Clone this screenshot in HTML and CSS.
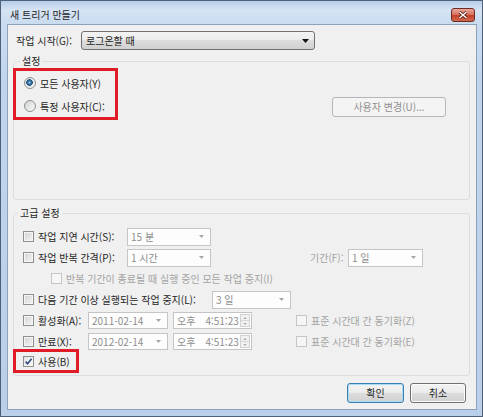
FILE: index.html
```html
<!DOCTYPE html>
<html lang="ko">
<head>
<meta charset="utf-8">
<title>새 트리거 만들기</title>
<link rel="stylesheet" href="styles.css">
</head>
<body>
<div class="window">
  <div class="titlebar">
    <span class="title">새 트리거 만들기</span>
    <span class="close"><svg width="10" height="8" viewBox="0 0 10 8"><path d="M1.5 1L8.5 7M8.5 1L1.5 7" stroke="#5a1a10" stroke-width="3" fill="none"/><path d="M1.5 1L8.5 7M8.5 1L1.5 7" stroke="#fff" stroke-width="1.5" fill="none"/></svg></span>
  </div>
  <div class="content">
    <div class="row-start">
      <span class="start-label">작업 시작(G):</span>
      <div class="select"><span>로그온할 때</span><svg width="7" height="4" viewBox="0 0 7 4"><path d="M0 0H7L3.5 4Z" fill="#111"/></svg></div>
    </div>

    <fieldset class="group group-settings">
      <legend>설정</legend>
      <div class="settings-row">
        <div class="mark radios">
          <div class="radio-row"><span class="radio checked"></span><span>모든 사용자(Y)</span></div>
          <div class="radio-row second"><span class="radio"></span><span>특정 사용자(C):</span></div>
        </div>
        <div class="btn disabled user-btn">사용자 변경(U)...</div>
      </div>
    </fieldset>

    <fieldset class="group group-adv">
      <legend>고급 설정</legend>
      <div class="adv-row">
        <span class="cb"></span><span class="lbl w-short">작업 지연 시간(S):</span>
        <div class="combo w84"><span>15 분</span><svg class="tri" width="5" height="3" viewBox="0 0 5 3"><path d="M0 0H5L2.5 3Z"/></svg></div>
      </div>
      <div class="adv-row">
        <span class="cb"></span><span class="lbl w-short">작업 반복 간격(P):</span>
        <div class="combo w84"><span>1 시간</span><svg class="tri" width="5" height="3" viewBox="0 0 5 3"><path d="M0 0H5L2.5 3Z"/></svg></div>
        <span class="lbl dim period-label">기간(F):</span>
        <div class="combo w75"><span>1 일</span><svg class="tri" width="5" height="3" viewBox="0 0 5 3"><path d="M0 0H5L2.5 3Z"/></svg></div>
      </div>
      <div class="adv-row indent">
        <span class="cb off"></span><span class="lbl dim">반복 기간이 종료될 때 실행 중인 모든 작업 중지(I)</span>
      </div>
      <div class="adv-row">
        <span class="cb"></span><span class="lbl w-long">다음 기간 이상 실행되는 작업 중지(L):</span>
        <div class="combo w79"><span>3 일</span><svg class="tri" width="5" height="3" viewBox="0 0 5 3"><path d="M0 0H5L2.5 3Z"/></svg></div>
      </div>
      <div class="adv-row">
        <span class="cb"></span><span class="lbl w-date">활성화(A):</span>
        <div class="combo date"><span>2011-02-14</span><svg class="tri" width="5" height="3" viewBox="0 0 5 3"><path d="M0 0H5L2.5 3Z"/></svg></div>
        <div class="combo time"><span class="ampm">오후</span><span>4:51:23</span><span class="spin"><span class="spin-btn"><svg width="5" height="3" viewBox="0 0 5 3"><path d="M0 3H5L2.5 0Z"/></svg></span><span class="spin-btn"><svg width="5" height="3" viewBox="0 0 5 3"><path d="M0 0H5L2.5 3Z"/></svg></span></span></div>
        <span class="cb off sync"></span><span class="lbl dim">표준 시간대 간 동기화(Z)</span>
      </div>
      <div class="adv-row">
        <span class="cb"></span><span class="lbl w-date">만료(X):</span>
        <div class="combo date"><span>2012-02-14</span><svg class="tri" width="5" height="3" viewBox="0 0 5 3"><path d="M0 0H5L2.5 3Z"/></svg></div>
        <div class="combo time"><span class="ampm">오후</span><span>4:51:23</span><span class="spin"><span class="spin-btn"><svg width="5" height="3" viewBox="0 0 5 3"><path d="M0 3H5L2.5 0Z"/></svg></span><span class="spin-btn"><svg width="5" height="3" viewBox="0 0 5 3"><path d="M0 0H5L2.5 3Z"/></svg></span></span></div>
        <span class="cb off sync"></span><span class="lbl dim">표준 시간대 간 동기화(E)</span>
      </div>
      <div class="mark enable">
        <span class="cb on"><svg width="9" height="9" viewBox="0 0 9 9"><path d="M1.6 4.6L3.6 6.8L7.6 1.8" fill="none" stroke="#2f4b85" stroke-width="1.6"/></svg></span><span class="lbl">사용(B)</span>
      </div>
    </fieldset>

    <div class="buttons">
      <div class="btn default ok">확인</div>
      <div class="btn cancel">취소</div>
    </div>
  </div>
</div>
</body>
</html>
```

FILE: styles.css
```css
* { box-sizing: border-box; }
html, body { margin: 0; padding: 0; }
body {
  width: 483px;
  height: 417px;
  overflow: hidden;
  font-family: "Noto Sans CJK KR", "Noto Sans", sans-serif;
  font-size: 10px;
  color: #262626;
  background: #bcd2ec;
}
.window {
  width: 483px;
  height: 417px;
  border: 1px solid #4f6178;
  padding: 0 5px 6px 6px;
  background: linear-gradient(#b6cde8 0, #d6e4f4 9px, #cadcf0 22px, #c0d5ed 80px, #b9cfea 100%);
  display: flex;
  flex-direction: column;
}
.titlebar {
  height: 23px;
  display: flex;
  justify-content: space-between;
  align-items: flex-start;
  flex: none;
}
.title {
  padding: 8px 0 0 3px;
  line-height: 12px;
  color: #1e1e1e;
}
.close {
  width: 24px;
  height: 14px;
  margin: 7px 2px 0 0;
  border: 1px solid #6d2b22;
  border-radius: 3px;
  background: linear-gradient(#eaa99c, #d87462 45%, #c5412b 55%, #d0694f);
  display: flex;
  align-items: center;
  justify-content: center;
}
.content {
  flex: 1;
  border: 1px solid #8da1ba;
  background: #f0f0f0;
  padding: 6px 0 6px 0;
  display: flex;
  flex-direction: column;
}
.row-start {
  display: flex;
  align-items: center;
  height: 19px;
  padding-left: 8px;
  flex: none;
}
.start-label { width: 65px; color: #262626; }
.select {
  width: 234px;
  height: 19px;
  border: 1px solid #707070;
  border-radius: 3px;
  background: linear-gradient(#f3f3f3, #ebebeb 50%, #dddddd 50%, #d0d0d0);
  display: flex;
  align-items: center;
  justify-content: space-between;
  padding: 0 5px 0 4px;
  color: #1e1e1e;
}

.group {
  margin: 5px 6px 0 5px;
  padding: 0;
  border: 1px solid #d8dee2;
  border-radius: 3px;
  min-width: 0;
}
.group legend {
  padding: 0 2px;
  margin-left: 6px;
  line-height: 12px;
  color: #262626;
}
.group-settings { padding: 0 0 79px 0; }
.group-adv { margin-top: 7px; padding: 7px 0 2px 0; }
.group-adv legend { margin-left: 4px; }

.mark { border: 3px solid #e01c26; }

.settings-row {
  display: flex;
  align-items: flex-end;
}
.radios {
  margin: 1px 0 0 -1px;
  width: 105px;
  padding-left: 8px;
}
.radio-row {
  display: flex;
  align-items: center;
  height: 24px;
  color: #262626;
}
.radio-row.second { height: 22px; }
.radio {
  width: 12px;
  height: 12px;
  flex: none;
  margin-right: 4px;
  border-radius: 50%;
  border: 1px solid #8e8f8f;
  background: linear-gradient(135deg, #cfd1d3, #fbfbfb);
}
.radio.checked {
  background: radial-gradient(circle at 45% 45%, #9cc9e6 0, #3b77a8 1.6px, #1d4f7c 3px, #dfe3e6 3.6px, #f3f3f3 5px);
}
.user-btn {
  margin: 0 23px 3px auto;
  width: 114px;
}

.btn {
  height: 20px;
  line-height: 18px;
  text-align: center;
  border: 1px solid #707070;
  border-radius: 3px;
  background: linear-gradient(#f3f3f3, #ebebeb 50%, #dddddd 50%, #d0d0d0);
  box-shadow: inset 0 0 0 1px #fbfbfb;
  color: #262626;
}
.btn.disabled {
  border-color: #b3b7ba;
  background: #f4f4f4;
  box-shadow: none;
  color: #8f8f8f;
}
.btn.default {
  border-color: #3c7fb1;
  box-shadow: inset 0 0 0 1px #a9dbf6;
}

.adv-row {
  display: flex;
  align-items: center;
  height: 21px;
  padding-left: 9px;
}
.adv-row.indent { padding-left: 37px; }

.cb {
  width: 11px;
  height: 11px;
  flex: none;
  margin-right: 4px;
  border: 1px solid #8f8f8f;
  background: linear-gradient(135deg, #d2d2d2, #f6f6f6);
  box-shadow: inset 0 0 0 1px #f6f6f6;
  display: flex;
}
.cb.off {
  border-color: #c6c6c6;
  background: #f6f6f6;
  box-shadow: none;
}
.cb.on {
  background: linear-gradient(135deg, #e4e4e4, #fafafa);
  box-shadow: none;
}
.lbl { flex: none; white-space: nowrap; color: #262626; }
.lbl.dim { color: #a3a3a3; }
.w-short { width: 89px; }
.w-long { width: 174px; }
.w-date { width: 50px; }
.period-label { margin-left: 99px; width: 38px; }

.combo {
  height: 18px;
  flex: none;
  border: 1px solid #c5c5c5;
  background: #fdfdfd;
  color: #8d8d8d;
  display: flex;
  align-items: center;
  justify-content: space-between;
  padding: 0 6px 0 3px;
}
.combo .tri path { fill: #a6a6a6; }
.w84 { width: 84px; }
.w75 { width: 75px; }
.w79 { width: 79px; }
.date { width: 80px; height: 17px; }
.time {
  width: 79px;
  height: 17px;
  margin-left: 5px;
  padding: 0 1px 0 3px;
  justify-content: flex-start;
}
.ampm { margin-right: 10px; }
.spin {
  margin-left: auto;
  width: 10px;
  height: 13px;
  display: flex;
  flex-direction: column;
  border: 1px solid #d2d2d2;
  background: #f1f1f1;
}
.spin-btn {
  flex: 1;
  display: flex;
  align-items: center;
  justify-content: center;
}
.spin-btn + .spin-btn { border-top: 1px solid #d8d8d8; }
.spin-btn svg { width: 4px; height: 2px; }
.spin-btn path { fill: #a8a8a8; }
.sync { margin-left: 44px; }

.enable {
  margin: -3px 0 0 -1px;
  width: 66px;
  height: 24px;
  display: flex;
  align-items: center;
  padding-left: 7px;
}

.buttons {
  display: flex;
  justify-content: flex-end;
  gap: 6px;
  margin-top: 7px;
  padding-right: 10px;
  flex: none;
}
.ok { width: 57px; }
.cancel { width: 56px; }
```
